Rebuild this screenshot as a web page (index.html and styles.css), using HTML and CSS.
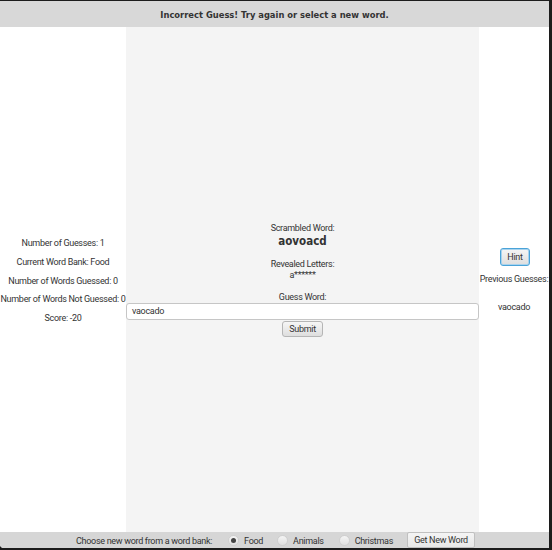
FILE: index.html
```html
<!DOCTYPE html>
<html>
<head>
<meta charset="utf-8">
<link rel="stylesheet" href="styles.css">
</head>
<body>
<div class="window">
  <div class="topbar">Incorrect Guess! Try again or select a new word.</div>
  <div class="main">
    <div class="left">
      <div class="stat">Number of Guesses: 1</div>
      <div class="stat">Current Word Bank: Food</div>
      <div class="stat">Number of Words Guessed: 0</div>
      <div class="stat">Number of Words Not Guessed: 0</div>
      <div class="stat">Score: -20</div>
    </div>
    <div class="center">
      <div class="label">Scrambled Word:</div>
      <div class="scrambled">aovoacd</div>
      <div class="label gap">Revealed Letters:</div>
      <div class="label">a******</div>
      <div class="label gap">Guess Word:</div>
      <div class="input">vaocado</div>
      <div class="btn submit">Submit</div>
    </div>
    <div class="right">
      <div class="btn hint">Hint</div>
      <div class="label prev">Previous Guesses:</div>
      <div class="label guess">vaocado</div>
    </div>
  </div>
  <div class="bottombar">
    <span class="choose">Choose new word from a word bank:</span>
    <span class="radio-item food"><span class="radio selected"></span>Food</span>
    <span class="radio-item animals"><span class="radio"></span>Animals</span>
    <span class="radio-item"><span class="radio"></span>Christmas</span>
    <span class="btn newword">Get New Word</span>
  </div>
</div>
</body>
</html>
```
FILE: styles.css
```css
html, body {
  margin: 0;
  padding: 0;
  background: #1c1c1c;
}
body {
  width: 552px;
  height: 550px;
  overflow: hidden;
  font-family: Roboto, "Liberation Sans", sans-serif;
  font-size: 9px;
  letter-spacing: -0.3px;
  color: #333;
}
.window {
  margin-top: 1px;
  width: 549px;
  height: 547px;
  background: #fff;
  display: flex;
  flex-direction: column;
  border-bottom-left-radius: 4px;
  overflow: hidden;
}
.topbar {
  height: 26px;
  flex: none;
  background: #d8d8d8;
  display: flex;
  align-items: center;
  justify-content: center;
  font-family: "DejaVu Sans Condensed", "DejaVu Sans", sans-serif;
  font-weight: bold;
  font-size: 9.3px;
  letter-spacing: 0;
  color: #333;
}
.main {
  flex: 1;
  display: flex;
}
.left {
  width: 126px;
  flex: none;
  display: flex;
  flex-direction: column;
  justify-content: center;
  align-items: center;
  gap: 6.75px;
  white-space: nowrap;
  padding-top: 2px;
  box-sizing: border-box;
}
.stat {
  line-height: 12px;
}
.center {
  width: 353px;
  flex: none;
  background: #f4f4f4;
  display: flex;
  flex-direction: column;
  justify-content: center;
  align-items: center;
}
.label {
  line-height: 11px;
}
.gap {
  margin-top: 11px;
}
.scrambled {
  font-family: "DejaVu Sans Condensed", "DejaVu Sans", sans-serif;
  font-weight: bold;
  font-size: 11.5px;
  letter-spacing: 0;
  line-height: 14px;
  color: #333;
}
.input {
  align-self: stretch;
  height: 17px;
  box-sizing: border-box;
  background: #fff;
  border: 1px solid #c6c6c6;
  border-radius: 3px;
  padding-left: 5px;
  line-height: 15px;
}
.btn {
  display: inline-flex;
  align-items: center;
  justify-content: center;
  box-sizing: border-box;
  border: 1px solid #b5b5b5;
  border-radius: 3px;
  background: linear-gradient(#f6f6f6, #dedede);
  color: #333;
}
.submit {
  width: 41px;
  height: 16px;
  margin-top: 1px;
}
.right {
  flex: 1;
  display: flex;
  flex-direction: column;
  justify-content: center;
  align-items: center;
  white-space: nowrap;
  padding-top: 2px;
  box-sizing: border-box;
}
.hint {
  width: 30px;
  height: 18px;
  border: 1px solid #4aa3d8;
  box-shadow: inset 0 0 0 1px #a9d3ee;
  margin-left: 2px;
}
.prev {
  margin-top: 8px;
}
.guess {
  margin-top: 17px;
}
.bottombar {
  height: 16px;
  flex: none;
  background: #d6d6d6;
  display: flex;
  align-items: center;
  white-space: nowrap;
}
.choose {
  margin-left: 76px;
  margin-right: 16px;
  padding-top: 1px;
}
.radio-item {
  display: inline-flex;
  align-items: center;
  padding-top: 1px;
}
.food {
  margin-right: 14px;
}
.animals {
  margin-right: 15px;
}
.radio {
  width: 11px;
  height: 11px;
  box-sizing: border-box;
  border-radius: 50%;
  background: linear-gradient(#f4f4f4, #e0e0e0);
  border: 1px solid #cfcfcf;
  margin-right: 5px;
  display: inline-flex;
  align-items: center;
  justify-content: center;
}
.radio.selected::after {
  content: "";
  width: 5px;
  height: 5px;
  border-radius: 50%;
  background: #444;
}
.newword {
  margin-left: 14px;
  width: 68px;
  height: 16px;
  border-radius: 2px;
  border: 1px solid #c0c0c0;
  background: linear-gradient(#f4f4f4, #e8e8e8);
}
```
